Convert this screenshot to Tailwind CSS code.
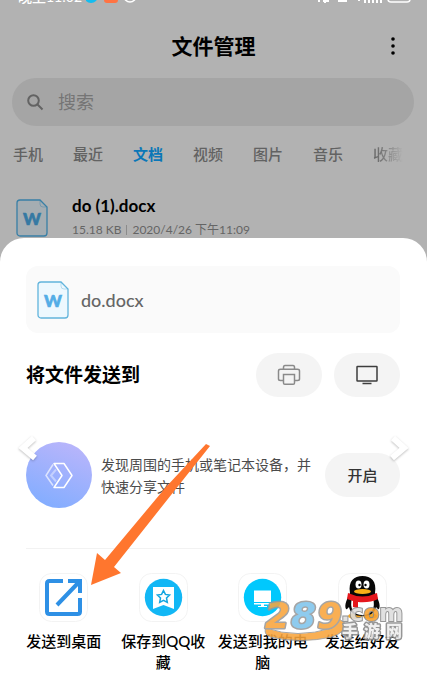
<!DOCTYPE html>
<html lang="zh-CN">
<head>
    <meta charset="UTF-8">
    <meta name="viewport" content="width=device-width, initial-scale=1.0">
    <title>文件管理</title>
    <script src="https://cdn.jsdelivr.net/npm/@tailwindcss/browser@4"></script>
</head>
<body class="relative min-h-screen overflow-x-hidden bg-[#b2b2b2] font-['Lato','Noto_Sans_CJK_SC',sans-serif] text-black">
    <!-- Status bar -->
    <div class="flex h-1 items-end justify-between overflow-hidden pr-4 pl-[18px] text-white">
        <div class="flex items-end gap-1">
            <span class="text-[14px] leading-[14px] font-medium">晚上11:02</span>
            <svg class="h-4 w-[54px]" viewBox="0 0 54 16" fill="none">
                <circle cx="5" cy="8" r="7" fill="#13bdf0"/>
                <rect x="18" y="1" width="14" height="14" rx="3" fill="#ff7343"/>
                <circle cx="44" cy="8" r="6" stroke="#fff" stroke-width="1.500"/>
            </svg>
        </div>
        <svg class="h-4 w-24" viewBox="0 0 96 16" fill="none">
            <path d="M4 8v6M8 13h6M10 9v6M23 13h9M44 12v1M50 12v3M54 10v5M58 8v7M62 6v9M66 4v11" stroke="#fff" stroke-width="2"/>
            <rect x="73" y="3" width="22" height="11" rx="3" stroke="#fff" stroke-width="1.500"/>
        </svg>
    </div>

    <!-- Header -->
    <header class="grid grid-cols-[1fr_auto_1fr] items-center px-[13px] pt-6">
        <h1 class="col-start-2 text-[21px] leading-9 font-bold">文件管理</h1>
        <button type="button" aria-label="更多" class="mr-[13px] justify-self-end">
            <svg class="h-6 w-4" viewBox="0 0 16 24"><circle cx="8" cy="5" r="1.800"/><circle cx="8" cy="12" r="1.800"/><circle cx="8" cy="19" r="1.800"/></svg>
        </button>
    </header>

    <!-- Search -->
    <label class="mr-[13px] ml-3 mt-[14px] flex h-12 items-center gap-[14px] rounded-full bg-[#a5a5a5] pl-[14px]">
        <svg class="h-[18px] w-[18px] shrink-0" viewBox="0 0 18 18" fill="none" stroke="#636363" stroke-width="2"><circle cx="7.500" cy="7.500" r="5.300"/><path d="M11.500 11.500l5 5"/></svg>
        <input type="text" placeholder="搜索" aria-label="搜索" class="w-full bg-transparent text-[18px] outline-none placeholder:text-[#757575]">
    </label>

    <!-- Tabs -->
    <nav class="mt-4 flex gap-[30px] overflow-hidden pl-[13px] text-[15px] leading-6 font-medium whitespace-nowrap text-[#626262]">
        <a href="#">手机</a>
        <a href="#">最近</a>
        <a href="#" class="font-bold text-[#0a77b8]">文档</a>
        <a href="#">视频</a>
        <a href="#">图片</a>
        <a href="#">音乐</a>
        <a href="#" class="bg-linear-to-r from-[#626262] to-[#b2b2b2] bg-clip-text text-transparent">收藏</a>
    </nav>

    <!-- File row -->
    <div class="mt-7 flex items-center gap-6 pl-4">
        <svg class="h-[38px] w-8 shrink-0" viewBox="0 0 32 38">
            <path d="M4 1h20l7 7v26a3 3 0 0 1-3 3H4a3 3 0 0 1-3-3V4a3 3 0 0 1 3-3z" fill="#a5adb2" stroke="#387fa6" stroke-width="1.300"/>
            <path d="M24 1v4q0 3 3 3h4" fill="none" stroke="#387fa6" stroke-width=".4"/>
            <text x="16" y="26" text-anchor="middle" font-size="17" font-weight="900" fill="#3579a3" stroke="#3579a3" stroke-width=".6">W</text>
        </svg>
        <div class="whitespace-nowrap">
            <p class="text-[17px] leading-6 font-bold">do (1).docx</p>
            <p class="flex items-center gap-[5px] text-[12px] leading-6 text-[#656565]"><span>15.18 KB</span><span class="h-[10px] w-px bg-[#8b8b8b]"></span><span>2020/4/26 下午11:09</span></p>
        </div>
    </div>

    <!-- Share sheet -->
    <main class="relative -mt-1 rounded-t-[24px] bg-white pt-7 pr-[27px] pb-1 pl-[26px]">
        <section class="flex h-[67px] items-center gap-3 rounded-xl bg-[#fafafa] pl-[11px]">
            <svg class="h-[38px] w-8 shrink-0" viewBox="0 0 32 38">
                <path d="M4 1h20l7 7v26a3 3 0 0 1-3 3H4a3 3 0 0 1-3-3V4a3 3 0 0 1 3-3z" fill="#edf8fe" stroke="#62b4dc" stroke-width="1.300"/>
                <path d="M24 1v4q0 3 3 3h4" fill="none" stroke="#62b4dc" stroke-width=".4"/>
                <text x="16" y="26" text-anchor="middle" font-size="17" font-weight="900" fill="#53ade6" stroke="#53ade6" stroke-width=".6">W</text>
            </svg>
            <p class="text-[18px] leading-6 font-medium text-[#666]">do.docx</p>
        </section>

        <section class="mt-5 flex items-center gap-3">
            <h2 class="mr-auto text-[19px] leading-7 font-bold">将文件发送到</h2>
            <button type="button" aria-label="打印" class="flex h-11 w-[66px] items-center justify-center rounded-full bg-[#f4f4f4]">
                <svg class="h-6 w-6" viewBox="0 0 24 24" fill="none" stroke="#8a8a8a" stroke-width="1.500"><path d="M6.500 6V4.500Q6.500 2.500 8 2.500h8q1.500 0 1.500 2V6M6 17.500H3.500Q1.500 17.500 1.500 16V8Q1.500 6.300 3.500 6.300h17q2 0 2 1.700v8q0 1.500-2 1.500H18M6.500 11.500h11v8.500q0 1.300-1.300 1.300H7.800q-1.300 0-1.300-1.300z"/></svg>
            </button>
            <button type="button" aria-label="投屏" class="flex h-11 w-[66px] items-center justify-center rounded-full bg-[#f4f4f4]">
                <svg class="h-6 w-6" viewBox="0 0 24 24" fill="none" stroke="#3d3d3d" stroke-width="1.500"><rect x="2" y="3.500" width="20" height="14.500" rx=".5"/><path d="M7.500 20.500h9"/></svg>
            </button>
        </section>

        <section class="mt-[45px] flex items-center">
            <svg class="h-[66px] w-[66px] shrink-0" viewBox="0 0 66 66" fill="none">
                <defs><linearGradient id="orb" x1=".7" y1="0" x2=".3" y2="1"><stop stop-color="#b9b5fb"/><stop offset="1" stop-color="#82adff"/></linearGradient></defs>
                <circle cx="33" cy="33" r="33" fill="url(#orb)"/>
                <path d="M28 21.500h10l8 12-8 12H28l8-12z" stroke="#fff" stroke-width="1.500" stroke-linejoin="round"/>
                <path d="M27 22.500l-7 11 7 10" stroke="#fff" stroke-opacity=".65" stroke-width="1.500"/>
                <path d="M30 27.500l-5 6 5 6" stroke="#fff" stroke-opacity=".4" stroke-width="2"/>
            </svg>
            <p class="ml-[9px] flex-1 pt-[2px] text-[14px] leading-[22px] text-[#4b4b4b]">发现周围的手机或笔记本设备，并快速分享文件</p>
            <button type="button" class="ml-3 h-11 w-[75px] shrink-0 rounded-full bg-[#f4f4f4] text-[15px] font-medium text-[#333]">开启</button>
        </section>

        <hr class="mt-10 border-[#f2f2f2]">

        <section class="-mx-3 mt-6 grid grid-cols-4 text-center text-[15px] leading-[21px] font-medium">
            <a href="#" class="flex flex-col items-center gap-[9px] px-1">
                <svg class="h-[49px] w-[49px]" viewBox="0 0 49 49" fill="none">
                    <rect x=".5" y=".5" width="48" height="48" rx="12" fill="#fff" stroke="#f3f3f3"/>
                    <path d="M24 8H10.500Q8 8 8 10.500v28Q8 41 10.500 41h28Q41 41 41 38.500V25M29 8h12v12M40 9L18 32" stroke="#2e90e5" stroke-width="4"/>
                </svg>
                <span>发送到桌面</span>
            </a>
            <a href="#" class="flex flex-col items-center gap-[9px] px-1">
                <svg class="h-[49px] w-[49px]" viewBox="0 0 49 49">
                    <rect x=".5" y=".5" width="48" height="48" rx="12" fill="#fff" stroke="#f3f3f3"/>
                    <circle cx="24.500" cy="24.500" r="18.700" fill="#12b7f5"/>
                    <path d="M14 14h21v22l-10.500-4L14 36z" fill="#fff"/>
                    <path d="M24.500 17.500l1.900 3.900 4.200.6-3.100 3 .8 4.300-3.800-2-3.800 2 .8-4.300-3.100-3 4.200-.6z" fill="none" stroke="#12a5e0" stroke-width="1.500"/>
                </svg>
                <span>保存到QQ收藏</span>
            </a>
            <a href="#" class="flex flex-col items-center gap-[9px] px-1">
                <svg class="h-[49px] w-[49px]" viewBox="0 0 49 49">
                    <rect x=".5" y=".5" width="48" height="48" rx="12" fill="#fff" stroke="#f3f3f3"/>
                    <circle cx="24.500" cy="24.500" r="18.700" fill="#00c8fd"/>
                    <path d="M16 17.500h17v11.500H16zM16 30h17v1.500H16zM23 31.500h3v1.500h3v1h-9v-1h3z" fill="#fff"/>
                </svg>
                <span>发送到我的电脑</span>
            </a>
            <a href="#" class="flex flex-col items-center gap-[9px] px-1">
                <svg class="h-[49px] w-[49px]" viewBox="0 0 49 49">
                    <rect x=".5" y=".5" width="48" height="48" rx="12" fill="#fff" stroke="#f3f3f3"/>
                    <ellipse cx="17" cy="43" rx="7" ry="3" fill="#f5a623"/><ellipse cx="32" cy="43" rx="7" ry="3" fill="#f5a623"/>
                    <path d="M12 20C10 8 16 3 24.500 3S39 8 37 20c3 6 6 12 4 16-1 1-3-2-3-2-1 6-6 9-13.500 9S12 40 11 34c0 0-2 3-3 2-2-4 1-10 4-16z" fill="#080808"/>
                    <path d="M14 25h21c3 11-2 17-10.500 17S11 36 14 25z" fill="#fff"/>
                    <path d="M10 20q14.500 7 29 0l1 6q-8 4-20 3v6l-5-1v-6l-6-2z" fill="#e5171c"/>
                    <ellipse cx="20.500" cy="11.500" rx="3" ry="4" fill="#fff"/><ellipse cx="28.500" cy="11.500" rx="3" ry="4" fill="#fff"/>
                    <circle cx="21.500" cy="12" r="1.200"/><circle cx="27.500" cy="12" r="1.200"/>
                    <ellipse cx="24.500" cy="18.500" rx="8.500" ry="2.500" fill="#f9af17"/>
                </svg>
                <span>发送给好友</span>
            </a>
        </section>

        <!-- Site watermark -->
        <svg class="pointer-events-none absolute right-[22px] bottom-[34px] h-[42px] w-[142px] overflow-visible" viewBox="0 0 142 42" opacity=".88">
            <path d="M3 27q31 11 66 0l6-10 8 6q-2 9-14 13-32 7-62 0-7-3-4-9z" fill="#f9a53c" stroke="#999" stroke-width="1"/>
            <g font-family="DejaVu Sans" font-weight="bold" font-style="italic" font-size="36" stroke="#999" stroke-width="3" stroke-linejoin="round" paint-order="stroke">
                <text x="2" y="27" fill="#f9a53c">2</text>
                <text x="28" y="27" fill="#7fc4ec">8</text>
                <text x="54" y="27" fill="#f9a53c">9</text>
            </g>
            <text x="78" y="20" font-family="DejaVu Sans" font-weight="bold" font-size="23" fill="#ddd" stroke="#888" stroke-width="2" paint-order="stroke">.c<tspan fill="#f7a130">o</tspan>m</text>
            <text y="36" font-family="Noto Sans CJK SC" font-weight="900" font-size="16" fill="#eee" stroke="#888" stroke-width="3" stroke-linejoin="round" paint-order="stroke"><tspan x="79">手</tspan><tspan x="101">游</tspan><tspan x="123">网</tspan></text>
        </svg>
    </main>

    <!-- Carousel arrows and pointer -->
    <button type="button" aria-label="上一张" class="absolute top-[434px] left-[18px]">
        <svg class="h-[28px] w-5 drop-shadow-[0_1px_1px_rgba(0,0,0,0.25)]" viewBox="0 0 20 28" fill="none" stroke="#fff" stroke-width="6"><path d="M16 4L5 14l12 10"/></svg>
    </button>
    <button type="button" aria-label="下一张" class="absolute top-[434px] right-[18px]">
        <svg class="h-[28px] w-5 drop-shadow-[0_1px_1px_rgba(0,0,0,0.25)]" viewBox="0 0 20 28" fill="none" stroke="#fff" stroke-width="6"><path d="M4 4l11 10L3 24"/></svg>
    </button>
    <svg class="pointer-events-none absolute top-[440px] left-[88px] h-[148px] w-[124px]" viewBox="88 440 124 148">
        <path d="M206 444l4 2-35 44-61 77 7 6-30 12 6-32 8 7 61-73z" fill="#ff762e"/>
    </svg>
</body>
</html>
